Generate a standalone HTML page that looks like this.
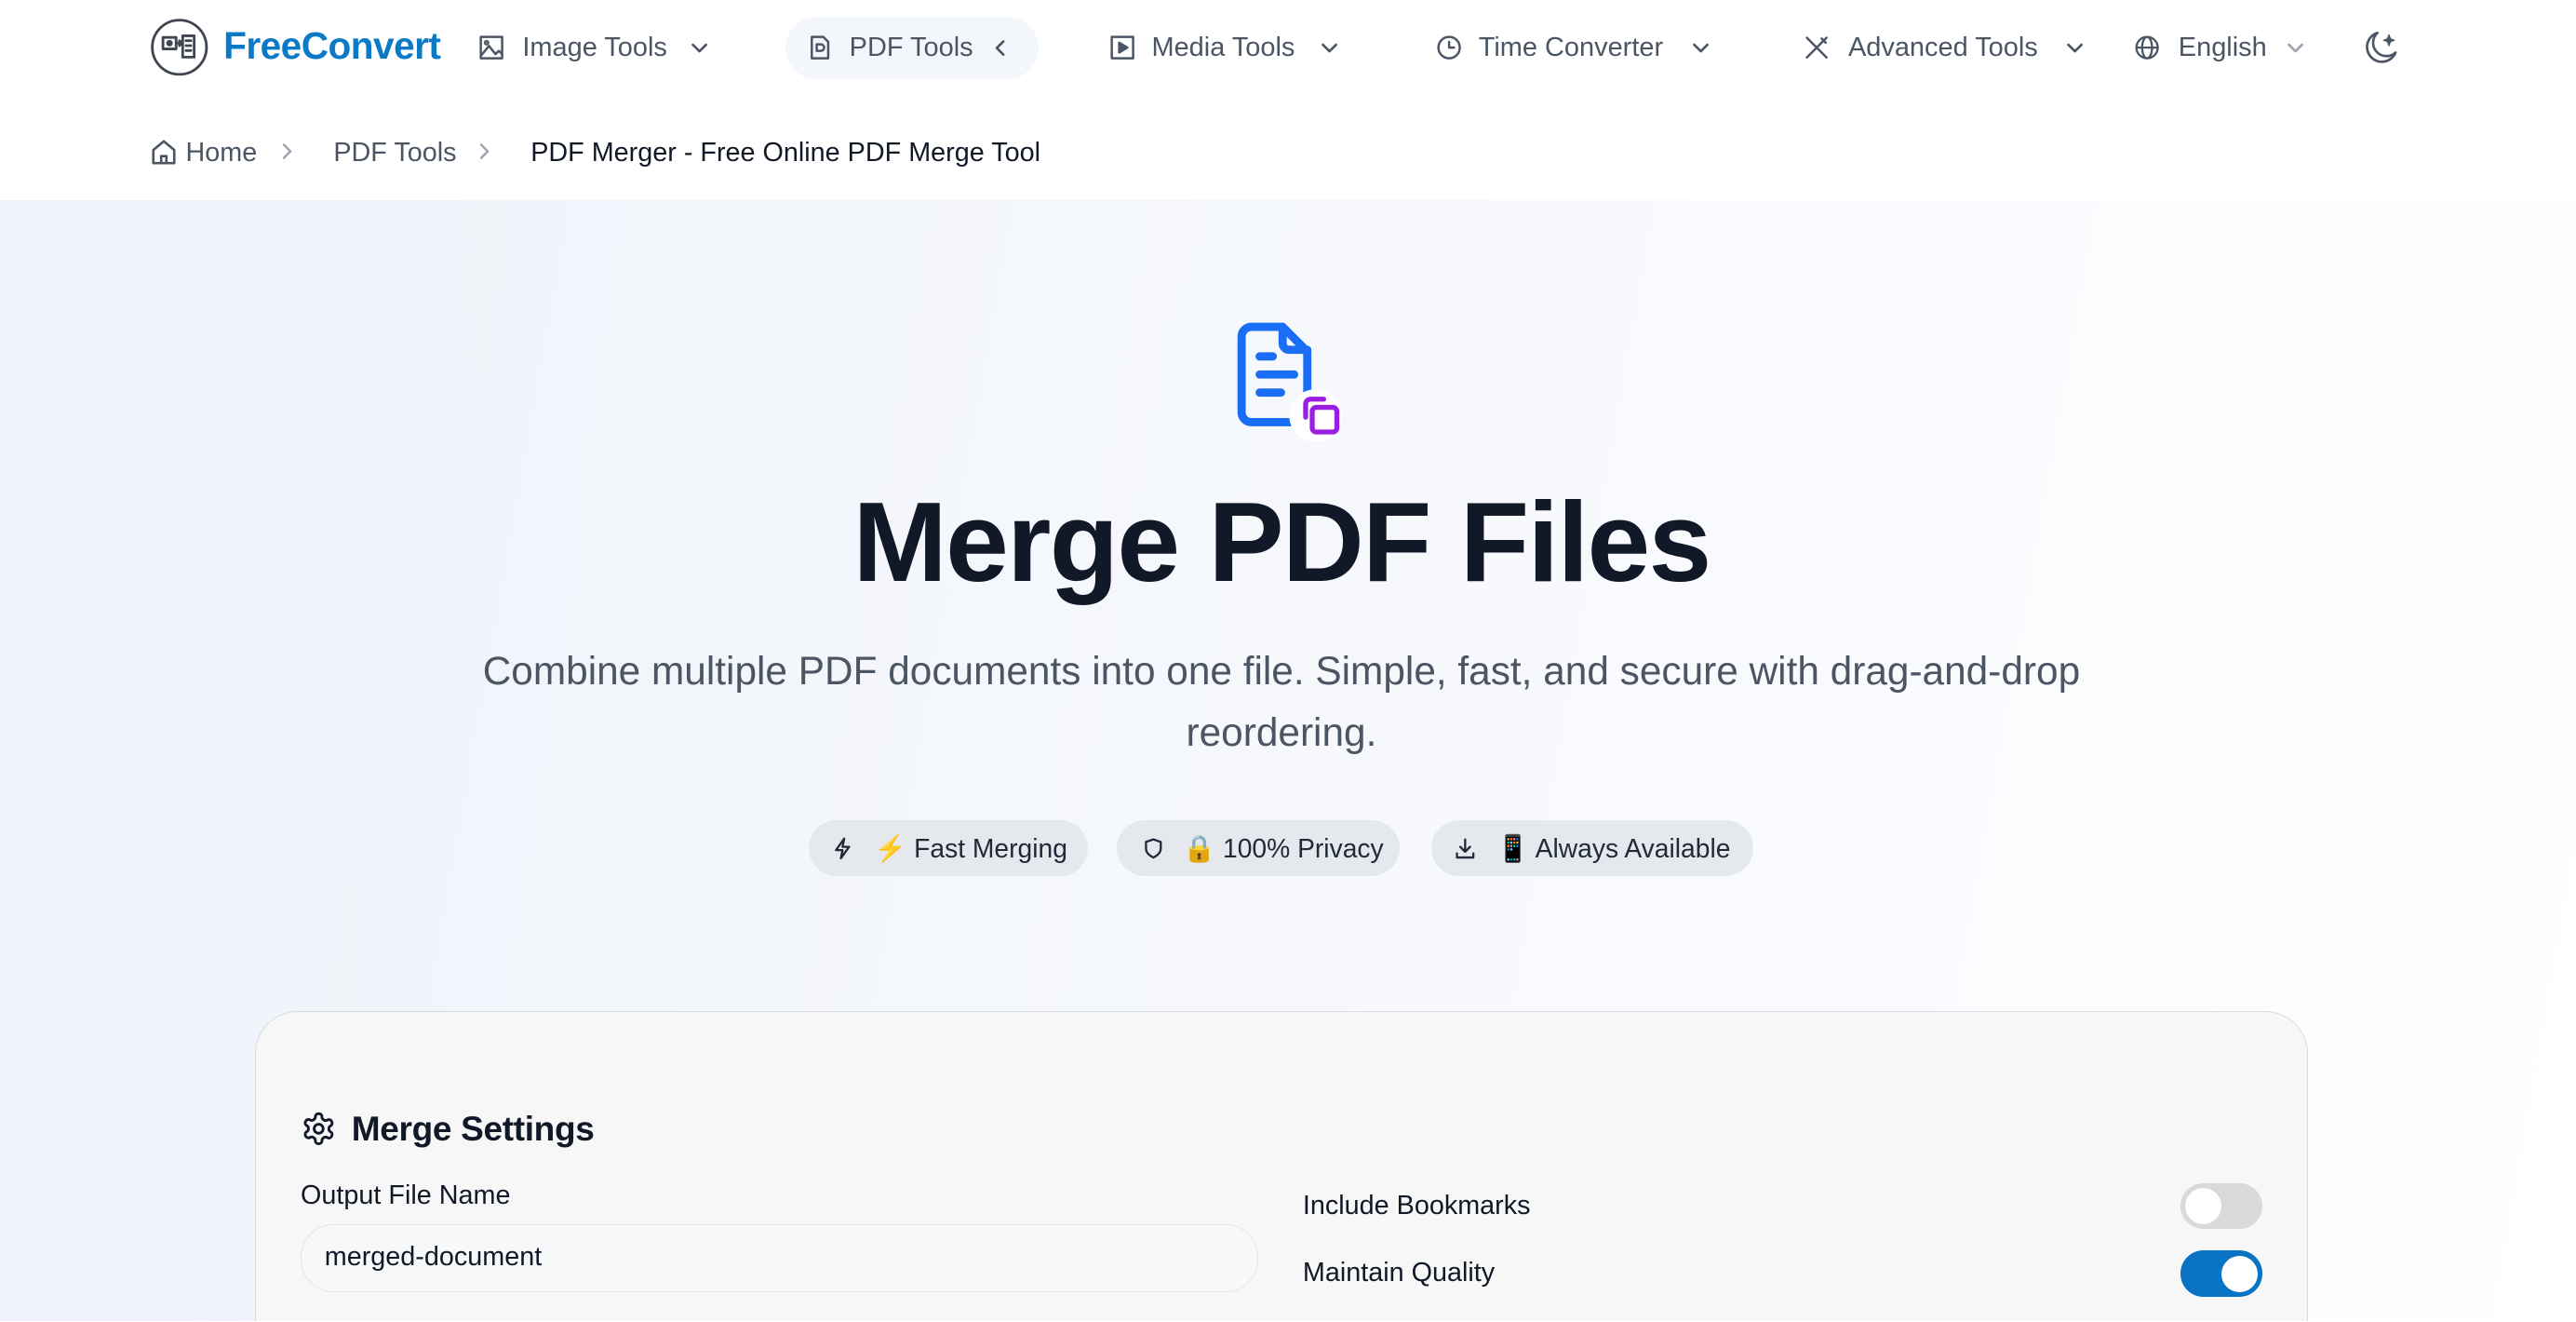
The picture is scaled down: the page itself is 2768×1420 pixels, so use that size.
<!DOCTYPE html>
<html><head><meta charset="utf-8"><style>
*{box-sizing:border-box;margin:0;padding:0}
html,body{width:2768px;height:1420px;overflow:hidden;background:#fff}
#r{zoom:1.76531;width:1568px;height:804px;position:relative;font-family:"Liberation Sans",sans-serif;color:#4b5563;overflow:hidden}
.a{position:absolute;white-space:nowrap}
.nav{font-size:16.4px;color:#4b5563;top:19px;line-height:20px}
svg{position:absolute;fill:none;stroke-linecap:round;stroke-linejoin:round}
.hero{position:absolute;left:0;top:122px;width:1568px;height:683px;background:linear-gradient(100deg,#eef3fa 0%,#f6f8fc 50%,#fbfcfe 80%,#ffffff 100%)}
.badge{position:absolute;top:499px;height:34px;border-radius:17px;background:#e5e9ee;font-size:16px;color:#1f2937;line-height:34px;padding-left:40px}
.tg{position:absolute;width:50px;height:28px;border-radius:14px}
.tg i{position:absolute;top:3px;width:22px;height:22px;border-radius:11px;background:#fff}
</style></head><body><div id="r">
<svg style="left:91px;top:11px" width="36" height="36" viewBox="0 0 36 36" stroke="#3f4650" stroke-width="1.6"><circle cx="18" cy="18" r="16.5"/><rect x="8" y="12" width="8" height="7"/><circle cx="12" cy="15.5" r="1.2" fill="#3f4650"/><path d="M16 15.5h3M18 14l1.5 1.5L18 17"/><rect x="20" y="11" width="7" height="13"/><path d="M22 14h3M22 17h3M22 20h3"/></svg>
<div class="a" style="left:136px;top:15px;font-size:23px;font-weight:bold;color:#0b79c6;letter-spacing:-0.3px">FreeConvert</div>
<svg style="left:291px;top:21px" width="16" height="16" viewBox="0 0 16 16" stroke="#4b5563" stroke-width="1.4"><rect x="1.5" y="1.5" width="13" height="13"/><path d="M1.5 13l5-6 4 5 2-2 2 2"/><circle cx="5" cy="5" r="1"/></svg>
<div class="a nav" style="left:318px">Image Tools</div>
<svg style="left:420px;top:23px" width="12" height="12" viewBox="0 0 12 12" stroke="#4b5563" stroke-width="1.5"><path d="M2 4l4 4 4-4"/></svg>
<div class="a" style="left:478px;top:10px;width:154px;height:38px;border-radius:19px;background:#f3f6fa"></div>
<svg style="left:491px;top:21px" width="16" height="16" viewBox="0 0 16 16" stroke="#4b5563" stroke-width="1.4"><path d="M3 1.5h7l3 3v10H3z"/><path d="M6 6h2.5a2 2 0 010 4H6z"/></svg>
<div class="a nav" style="left:517px">PDF Tools</div>
<svg style="left:603px;top:23px" width="12" height="12" viewBox="0 0 12 12" stroke="#4b5563" stroke-width="1.5"><path d="M8 2L4 6l4 4"/></svg>
<svg style="left:675px;top:21px" width="16" height="16" viewBox="0 0 16 16" stroke="#4b5563" stroke-width="1.4"><rect x="1.5" y="1.5" width="13" height="13"/><path d="M6 5l5 3-5 3z" fill="#4b5563"/></svg>
<div class="a nav" style="left:701px">Media Tools</div>
<svg style="left:803px;top:23px" width="12" height="12" viewBox="0 0 12 12" stroke="#4b5563" stroke-width="1.5"><path d="M2 4l4 4 4-4"/></svg>
<svg style="left:874px;top:21px" width="16" height="16" viewBox="0 0 16 16" stroke="#4b5563" stroke-width="1.4"><circle cx="8" cy="8" r="6.5"/><path d="M8 4.5V8h3"/></svg>
<div class="a nav" style="left:900px">Time Converter</div>
<svg style="left:1029px;top:23px" width="12" height="12" viewBox="0 0 12 12" stroke="#4b5563" stroke-width="1.5"><path d="M2 4l4 4 4-4"/></svg>
<svg style="left:1098px;top:21px" width="16" height="16" viewBox="0 0 16 16" stroke="#4b5563" stroke-width="1.4"><path d="M2 2l12 12M14 2L2 14M11 2.5l2.5 2.5"/></svg>
<div class="a nav" style="left:1125px">Advanced Tools</div>
<svg style="left:1257px;top:23px" width="12" height="12" viewBox="0 0 12 12" stroke="#4b5563" stroke-width="1.5"><path d="M2 4l4 4 4-4"/></svg>
<svg style="left:1299px;top:21px" width="16" height="16" viewBox="0 0 16 16" stroke="#4b5563" stroke-width="1.3"><circle cx="8" cy="8" r="6.5"/><ellipse cx="8" cy="8" rx="3" ry="6.5"/><path d="M1.5 8h13"/></svg>
<div class="a nav" style="left:1326px">English</div>
<svg style="left:1391px;top:23px" width="12" height="12" viewBox="0 0 12 12" stroke="#9ca3af" stroke-width="1.5"><path d="M2 4l4 4 4-4"/></svg>
<svg style="left:1437px;top:17px" width="24" height="24" viewBox="0 0 24 24" stroke="#4b5563" stroke-width="1.5"><path d="M10 3a9 9 0 1011 12A8 8 0 0110 3z"/><path d="M17 4l1 2.5 2.5 1-2.5 1-1 2.5-1-2.5-2.5-1 2.5-1z" fill="#4b5563" stroke-width="0.5"/></svg>
<svg style="left:91px;top:84px" width="17" height="17" viewBox="0 0 16 16" stroke="#4b5563" stroke-width="1.4"><path d="M2 7l6-5 6 5v7.5H2z"/><path d="M6.5 14.5v-4h3v4"/></svg>
<div class="a" style="left:113px;top:83px;font-size:16.3px;line-height:20px">Home</div>
<svg style="left:169px;top:86px" width="12" height="12" viewBox="0 0 12 12" stroke="#9ca3af" stroke-width="1.4"><path d="M4 2l4 4-4 4"/></svg>
<div class="a" style="left:203px;top:83px;font-size:16.3px;line-height:20px">PDF Tools</div>
<svg style="left:289px;top:86px" width="12" height="12" viewBox="0 0 12 12" stroke="#9ca3af" stroke-width="1.4"><path d="M4 2l4 4-4 4"/></svg>
<div class="a" style="left:323px;top:83px;font-size:16.3px;line-height:20px;color:#111827">PDF Merger - Free Online PDF Merge Tool</div>
<div class="hero"></div>
<svg style="left:748px;top:195px" width="72" height="74" viewBox="0 0 72 74" stroke="#1a6ef5" stroke-width="5"><path d="M46 62H14a6 6 0 01-6-6V10a6 6 0 016-6h19l15 15v25"/><path d="M33 4v10a4 4 0 004 4h11"/><path d="M19 22h8M19 33h21M19 44h13"/><circle cx="53" cy="58" r="16" fill="#fff" stroke="none"/><path d="M58 48h-8a3 3 0 00-3 3v8" stroke="#9c1ee0" stroke-width="3"/><rect x="51" y="53" width="15" height="15" rx="2.5" stroke="#9c1ee0" stroke-width="3"/></svg>
<div class="a" style="left:0;width:1560px;text-align:center;top:290px;font-size:69px;font-weight:bold;color:#111827;line-height:80px;letter-spacing:-1px">Merge PDF Files</div>
<div class="a" style="left:270px;width:1020px;text-align:center;top:390px;font-size:24px;line-height:37px;white-space:normal;color:#4b5563">Combine multiple PDF documents into one file. Simple, fast, and secure with drag-and-drop reordering.</div>
<div class="badge" style="left:492px;width:170px">⚡ Fast Merging</div>
<svg style="left:506px;top:509px" width="14" height="14" viewBox="0 0 14 14" stroke="#1f2937" stroke-width="1.3"><path d="M8 1L3 8h4l-1 5 5-7H7z"/></svg>
<div class="badge" style="left:680px;width:172px">🔒 100% Privacy</div>
<svg style="left:695px;top:509px" width="14" height="14" viewBox="0 0 14 14" stroke="#1f2937" stroke-width="1.3"><path d="M7 1.5l4.5 1.5v4c0 3-2.5 4.5-4.5 5.5C5 11.5 2.5 10 2.5 7V3z"/></svg>
<div class="badge" style="left:871px;width:196px">📱 Always Available</div>
<svg style="left:885px;top:509px" width="14" height="14" viewBox="0 0 14 14" stroke="#1f2937" stroke-width="1.3"><path d="M7 1.5v7M4 6l3 3 3-3M2 10v2.5h10V10"/></svg>
<div class="a" style="left:155px;top:615px;width:1250px;height:260px;border:1px solid #d6dbe1;border-radius:26px;background:#f7f7f7"></div>
<svg style="left:183px;top:676px" width="22" height="22" viewBox="0 0 24 24" stroke="#111827" stroke-width="1.8"><path d="M12.2 2h-.4a2 2 0 00-2 2v.2a2 2 0 01-1 1.7l-.4.3a2 2 0 01-2 0l-.2-.1a2 2 0 00-2.7.7l-.2.4a2 2 0 00.7 2.7l.2.1a2 2 0 011 1.7v.5a2 2 0 01-1 1.7l-.2.1a2 2 0 00-.7 2.7l.2.4a2 2 0 002.7.7l.2-.1a2 2 0 012 0l.4.3a2 2 0 011 1.7V20a2 2 0 002 2h.4a2 2 0 002-2v-.2a2 2 0 011-1.7l.4-.3a2 2 0 012 0l.2.1a2 2 0 002.7-.7l.2-.4a2 2 0 00-.7-2.7l-.2-.1a2 2 0 01-1-1.7v-.5a2 2 0 011-1.7l.2-.1a2 2 0 00.7-2.7l-.2-.4a2 2 0 00-2.7-.7l-.2.1a2 2 0 01-2 0l-.4-.3a2 2 0 01-1-1.7V4a2 2 0 00-2-2z"/><circle cx="12" cy="12" r="3"/></svg>
<div class="a" style="left:214px;top:674px;font-size:21px;font-weight:bold;color:#111827;line-height:26px;letter-spacing:-0.2px">Merge Settings</div>
<div class="a" style="left:183px;top:718px;font-size:16.3px;color:#111827;line-height:20px">Output File Name</div>
<div class="a" style="left:183px;top:745px;width:583px;height:41px;border:1px solid #e0e6ee;border-radius:20px;background:#f7f8f9;font-size:16.3px;color:#111827;line-height:39px;padding-left:14px">merged-document</div>
<div class="a" style="left:793px;top:724px;font-size:16.3px;color:#111827;line-height:20px">Include Bookmarks</div>
<div class="a" style="left:793px;top:765px;font-size:16.3px;color:#111827;line-height:20px">Maintain Quality</div>
<div class="tg" style="left:1327px;top:720px;background:#d9d9d9"><i style="left:3px"></i></div>
<div class="tg" style="left:1327px;top:761px;background:#0a74c4"><i style="left:25px"></i></div>
</div></body></html>
